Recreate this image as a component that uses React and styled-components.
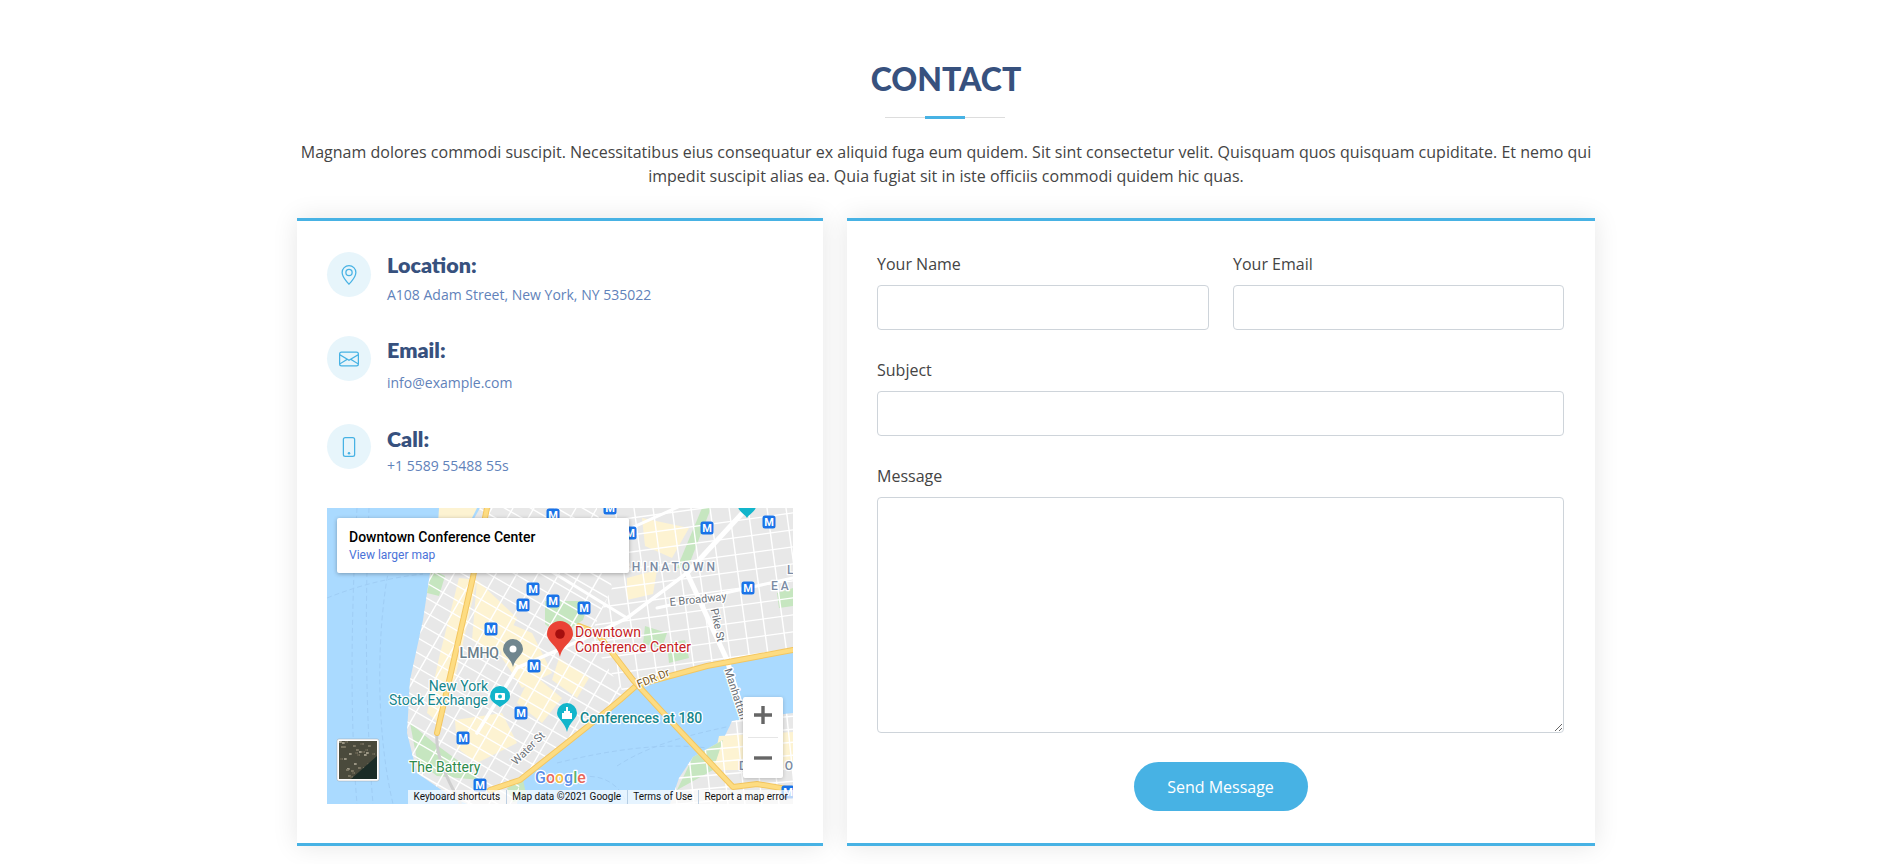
import React from 'react'
import styled, { createGlobalStyle } from 'styled-components'
import { BsGeoAlt, BsEnvelope, BsPhone } from 'react-icons/bs'

const Global = createGlobalStyle`
  html, body { margin: 0; padding: 0; background: #fff; overflow: hidden; }
  body { font-family: "Open Sans", "Liberation Sans", sans-serif; color: #444; }
`

const Section = styled.section`
  width: 1892px;
  height: 864px;
  padding-top: 60px;
  box-sizing: border-box;
  overflow: hidden;
`

const Heading = styled.header`
  text-align: center;
  width: 1298px;
  margin: 0 auto 30px;
`

const Title = styled.h2`
  position: relative;
  margin: 0 0 22px;
  height: 58px;
  line-height: 37px;
  font-family: Lato, "Open Sans", sans-serif;
  font-size: 32px;
  font-weight: 900;
  color: #37517e;
  text-transform: uppercase;

  &::before {
    content: '';
    position: absolute;
    left: 50%;
    bottom: 0;
    width: 120px;
    height: 1px;
    margin-left: -61px;
    background: #ddd;
  }
  &::after {
    content: '';
    position: absolute;
    left: 50%;
    bottom: -1px;
    width: 40px;
    height: 3px;
    margin-left: -21px;
    background: #47b2e4;
  }
`

const Lead = styled.p`
  margin: 0;
  font-size: 16px;
  line-height: 24px;
`

const Row = styled.div`
  display: flex;
  gap: 24px;
  width: 1298px;
  margin: 0 auto;
`

const Card = styled.div`
  box-sizing: border-box;
  width: ${p => p.$width}px;
  height: 628px;
  padding: ${p => p.$top || 30}px 30px 30px;
  background: #fff;
  border-top: 3px solid #47b2e4;
  border-bottom: 3px solid #47b2e4;
  box-shadow: 0 0 24px rgba(0, 0, 0, 0.1);
`

const Info = styled.div`
  position: relative;
  height: ${p => p.$height}px;
  padding-left: 60px;
`

const IconCircle = styled.span`
  position: absolute;
  left: 0;
  top: 0;
  width: 44px;
  height: 45px;
  display: flex;
  align-items: center;
  justify-content: center;
  border-radius: 50%;
  background: #e7f5fb;
  color: #47b2e4;
  font-size: 20px;
`

const InfoTitle = styled.h4`
  margin: 0 0 ${p => p.$gap}px;
  padding-top: ${p => p.$offset || 0}px;
  font-family: Lato, "Open Sans", sans-serif;
  font-size: 21.5px;
  line-height: 26px;
  font-weight: 800;
  color: #37517e;
`

const InfoText = styled.p`
  margin: 0;
  font-size: 14px;
  line-height: 20px;
  color: #6182ba;
`

const MapBox = styled.div`
  position: relative;
  width: 466px;
  height: 296px;
  overflow: hidden;
  background: #aadaff;
`

const MapArt = styled.svg`
  display: block;
  width: 466px;
  height: 296px;
`

const PlaceCard = styled.div`
  position: absolute;
  left: 10px;
  top: 10px;
  box-sizing: border-box;
  width: 292px;
  height: 55px;
  padding: 9px 12px;
  background: #fff;
  border-radius: 2px;
  box-shadow: 0 1px 4px rgba(0, 0, 0, 0.3);
  font-family: Roboto, sans-serif;
`

const PlaceName = styled.div`
  font-size: 14px;
  line-height: 20px;
  font-weight: 500;
  color: #000;
`

const LargerMap = styled.a`
  display: block;
  font-size: 12px;
  line-height: 16px;
  color: #4a72d8;
`

const Zoom = styled.div`
  position: absolute;
  left: 416px;
  top: 189px;
  width: 40px;
  height: 81px;
  background: #fff;
  border-radius: 2px;
  box-shadow: 0 1px 4px rgba(0, 0, 0, 0.2);
`

const ZoomDivider = styled.div`
  position: absolute;
  left: 5px;
  right: 5px;
  top: 40px;
  height: 1px;
  background: #e6e6e6;
`

const ZoomGlyph = styled.svg`
  position: absolute;
  left: 10px;
  top: ${p => p.$top}px;
  width: 20px;
  height: 20px;
`

const Attribution = styled.div`
  position: absolute;
  left: 81px;
  right: 0;
  bottom: 0;
  height: 14px;
  display: flex;
  align-items: center;
  background: rgba(255, 255, 255, 0.7);
  font-family: Roboto, sans-serif;
  font-size: 10px;
  color: #111;
  white-space: nowrap;
`

const AttributionItem = styled.span`
  padding: 0 5.5px;
  line-height: 14px;
  & + & { border-left: 1px solid rgba(150, 180, 210, 0.6); }
`

const Form = styled.form`
  display: grid;
  grid-template-columns: 332px 331px;
  column-gap: 24px;
  align-content: start;
`

const Field = styled.div`
  grid-column: ${p => (p.$wide ? '1 / 3' : 'auto')};
  margin-bottom: ${p => p.$bottom || 27.5}px;
`

const Label = styled.label`
  display: block;
  margin-bottom: 8px;
  font-size: 16px;
  line-height: 26px;
  color: #444;
`

const Input = styled.input`
  display: block;
  box-sizing: border-box;
  width: 100%;
  height: 44.5px;
  padding: 6px 12px;
  background: #fff;
  border: 1px solid #ced4da;
  border-radius: 4px;
  font-family: inherit;
`

const TextArea = styled.textarea`
  display: block;
  box-sizing: border-box;
  width: 100%;
  height: 236px;
  padding: 6px 12px;
  background: #fff;
  border: 1px solid #ced4da;
  border-radius: 4px;
  font-family: inherit;
`

const Actions = styled.div`
  grid-column: 1 / 3;
  display: flex;
  justify-content: center;
`

const Send = styled.button`
  width: 174px;
  height: 49px;
  padding: 0;
  border: 0;
  border-radius: 50px;
  background: #47b2e4;
  color: #fff;
  font-family: inherit;
  font-size: 16px;
`

// --- map drawing data, in map pixels ---
const land = '0,0 153,0 136,30 103,65 96,112 83,172 80,225 90,265 126,290 140,296 190,296 193,272 260,219 293,192 310,177 380,158 466,142 466,0'
const brooklyn = '466,205 440,208 405,213 396,232 366,249 352,270 343,296 466,296'
const westSide = '0,0 270,0 285,80 262,130 300,190 200,296 0,296'
const eastSide = '270,0 466,0 466,160 300,190 262,130 285,80'

const range = (from, to, step) => {
  const out = []
  for (let v = from; v <= to; v += step) out.push(v)
  return out
}

// the old town grid runs at 30 degrees, the east side is nearly square to the page
const westCross = range(-340, 300, 15).map(o => `M-100 ${o}L500 ${o + 346}`)
const westLong = range(60, 620, 21).map(o => `M${o} 0L${o - 171} 296`)
const eastCross = range(0, 240, 17).map(y => `M260 ${y + 16}L480 ${y - 14}`)
const eastLong = range(250, 480, 19).map(x => `M${x} 0L${x + 26} 190`)
const brooklynCross = range(200, 300, 13).map(y => `M340 ${y + 6}L480 ${y - 6}`)
const brooklynLong = range(340, 480, 17).map(x => `M${x} 200L${x + 10} 296`)

const yellowBlocks = [
  '132,70 150,72 128,170 112,215 100,205 112,150',
  '150,72 190,110 170,150 145,132',
  '170,110 205,125 225,165 195,180 175,150',
  '205,165 235,190 215,215 190,195',
  '128,212 175,205 190,235 150,255 130,240',
  '112,0 150,0 130,40 108,62',
  '315,10 362,20 345,50 318,38',
  '232,150 262,170 250,190 225,172',
  '170,25 198,40 186,60 160,48',
  '392,228 466,224 466,262 385,262',
  '300,70 330,62 326,86 300,92',
]

const parks = [
  '218,93 262,93 256,112 232,128 218,116',
  '83,215 107,235 137,257 153,272 110,268 90,252',
  '375,0 384,0 360,62 350,60',
  '105,62 118,68 112,88 100,85',
  '366,249 396,232 386,262 350,282',
  '450,85 466,80 466,98 452,100',
  '318,118 340,125 335,140 316,136',
  '340,135 358,132 362,150 342,155',
  '180,280 196,272 200,290 186,294',
]

const metros = [
  [226, 7], [283, 0], [206, 81], [196, 97], [226, 93], [257, 100], [164, 121], [207, 158],
  [194, 205], [380, 20], [442, 14], [421, 80], [303, 25], [136, 230], [153, 277], [461, 284],
]

// speckle for the little satellite tile, repeatable from the index alone
const speckle = range(0, 119, 1).map(i => ({
  x: 12 + ((i * 23) % 37),
  y: 233 + ((i * i * 7 + i * 3) % 37),
  tone: ['#9a9583', '#5f5b4a', '#7a7562'][i % 3],
}))

const labelHalo = { paintOrder: 'stroke', stroke: '#fff', strokeWidth: 2.5, strokeLinejoin: 'round' }

function Metro({ x, y }) {
  return (
    <g>
      <rect x={x - 6.5} y={y - 6.5} width="13" height="13" rx="2.5" fill="#1a73e8" />
      <text x={x} y={y + 4} textAnchor="middle" fontFamily="Roboto" fontWeight="700" fontSize="11" fill="#fff">M</text>
    </g>
  )
}

function Pin({ x, y, r, tip, fill, children }) {
  return (
    <g>
      <path d={`M${x} ${tip}C${x - 2} ${y + r * 0.9} ${x - r} ${y + r * 0.6} ${x - r} ${y}A${r} ${r} 0 1 1 ${x + r} ${y}C${x + r} ${y + r * 0.6} ${x + 2} ${y + r * 0.9} ${x} ${tip}Z`} fill={fill} />
      {children}
    </g>
  )
}

function MapLabel({ children, ...rest }) {
  return (
    <text fontFamily="Roboto" fontSize="14" style={labelHalo} {...rest}>{children}</text>
  )
}

function Streets({ paths, width = 1.4 }) {
  return (
    <g fill="none" stroke="#fff" strokeWidth={width}>
      {paths.map(d => <path key={d} d={d} />)}
    </g>
  )
}

function MapDrawing() {
  return (
    <MapArt viewBox="0 0 466 296">
      <defs>
        <clipPath id="manhattan"><polygon points={land} /></clipPath>
        <clipPath id="brooklyn"><polygon points={brooklyn} /></clipPath>
        <clipPath id="west"><polygon points={westSide} /></clipPath>
        <clipPath id="east"><polygon points={eastSide} /></clipPath>
        <clipPath id="thumb"><rect x="12" y="233" width="38" height="38" /></clipPath>
      </defs>
      <rect width="466" height="296" fill="#aadaff" />
      <g fill="none" stroke="#9fcdf5" strokeWidth="1" strokeDasharray="5 3">
        <path d="M30 0C25 90 22 200 30 296" />
        <path d="M42 0C38 90 38 200 46 296" />
        <path d="M62 60C50 120 48 220 66 296" />
        <path d="M0 90C30 78 60 70 96 66" />
        <path d="M290 258C330 232 380 222 466 206" />
        <path d="M230 255C290 240 340 235 380 240" />
        <path d="M240 275C260 262 290 268 300 296" />
      </g>
      <polygon points={land} fill="#e8e8e8" />
      <polygon points={brooklyn} fill="#e8e8e8" />
      <g fill="#fdf3d2">
        {yellowBlocks.map(b => <polygon key={b} points={b} />)}
      </g>
      <g fill="#c6e6c0">
        {parks.map(p => <polygon key={p} points={p} />)}
      </g>
      <g clipPath="url(#manhattan)">
        <g clipPath="url(#west)">
          <Streets paths={westCross} />
          <Streets paths={westLong} />
        </g>
        <g clipPath="url(#east)">
          <Streets paths={eastCross} />
          <Streets paths={eastLong} />
        </g>
      </g>
      <g clipPath="url(#brooklyn)">
        <Streets paths={brooklynCross} />
        <Streets paths={brooklynLong} />
      </g>
      <g fill="none" stroke="#fff" strokeLinecap="round">
        <path d="M420 0L360 65L400 152L416 205" strokeWidth="5" />
        <path d="M360 65L300 110L270 125L190 160L150 225" strokeWidth="3.5" />
        <path d="M330 100L466 70" strokeWidth="3" />
        <path d="M215 60L360 -5" strokeWidth="3" />
        <path d="M170 30L300 110" strokeWidth="3" />
      </g>
      <path d="M110 225C108 245 118 268 134 296" fill="none" stroke="#cfcfcf" strokeWidth="3" />
      <g fill="none" strokeLinecap="round" strokeLinejoin="round">
        <path d="M163 282L193 272L260 219L293 192L310 177L380 158L466 142" stroke="#f3c661" strokeWidth="6" />
        <path d="M163 282L193 272L260 219L293 192L310 177L380 158L466 142" stroke="#fddc82" strokeWidth="4" />
        <path d="M252 118L270 125L306 172L340 209L406 279L430 276L466 282" stroke="#f3c661" strokeWidth="6" />
        <path d="M252 118L270 125L306 172L340 209L406 279L430 276L466 282" stroke="#fddc82" strokeWidth="4" />
        <path d="M160 0L146 69L123 169L110 225" stroke="#f3c661" strokeWidth="6" />
        <path d="M160 0L146 69L123 169L110 225" stroke="#fddc82" strokeWidth="4" />
      </g>

      {metros.map(([x, y]) => <Metro key={`${x}-${y}`} x={x} y={y} />)}

      <text x="391" y="63" textAnchor="end" fontFamily="Roboto" fontWeight="500" fontSize="12" letterSpacing="3" fill="#7b8ba3" style={labelHalo}>CHINATOWN</text>
      <text x="460" y="66" fontFamily="Roboto" fontWeight="500" fontSize="12" letterSpacing="3" fill="#7b8ba3" style={labelHalo}>L</text>
      <text x="444" y="82" fontFamily="Roboto" fontWeight="500" fontSize="12" letterSpacing="3" fill="#7b8ba3" style={labelHalo}>EA</text>
      <text x="412" y="262" fontFamily="Roboto" fontWeight="500" fontSize="12" letterSpacing="3" fill="#7b8ba3" style={labelHalo}>DUMBO</text>

      <MapLabel x="371" y="95" fontSize="11" textAnchor="middle" fill="#6b7178" transform="rotate(-6 371 91)">E Broadway</MapLabel>
      <MapLabel x="391" y="121" fontSize="11" textAnchor="middle" fill="#6b7178" transform="rotate(78 391 117)">Pike St</MapLabel>
      <MapLabel x="412" y="186" fontSize="11" textAnchor="middle" fill="#6b7178" transform="rotate(72 408 182)">Manhattan</MapLabel>
      <MapLabel x="201" y="244" fontSize="11" textAnchor="middle" fill="#6b7178" transform="rotate(-45 201 240)">Water St</MapLabel>
      <MapLabel x="326" y="174" fontSize="11" textAnchor="middle" fill="#7a5a1e" transform="rotate(-22 326 170)">FDR Dr</MapLabel>

      <MapLabel x="172" y="150" textAnchor="end" fontWeight="500" fill="#6a7f8c">LMHQ</MapLabel>
      <MapLabel x="161" y="183" textAnchor="end" fill="#15868c">New York</MapLabel>
      <MapLabel x="161" y="197" textAnchor="end" fill="#15868c">Stock Exchange</MapLabel>
      <MapLabel x="82" y="264" fill="#2e8b4a">The Battery</MapLabel>
      <MapLabel x="253" y="215" fontWeight="500" fill="#15868c">Conferences at 180</MapLabel>
      <MapLabel x="248" y="129" fill="#c5221f">Downtown</MapLabel>
      <MapLabel x="248" y="144" fill="#c5221f">Conference Center</MapLabel>

      <Pin x={186} y={141} r={10} tip={159} fill="#70868f"><circle cx="186" cy="141" r="3.5" fill="#fff" /></Pin>
      <Pin x={173} y={188} r={10} tip={199} fill="#12b5cb">
        <rect x="168" y="185" width="10" height="7" rx="1" fill="#fff" />
        <circle cx="173" cy="188.5" r="2" fill="#12b5cb" />
      </Pin>
      <Pin x={240} y={205} r={10} tip={224} fill="#12b5cb">
        <path d="M235 211V205H237V203H239V199H241V203H243V205H245V211Z" fill="#fff" />
      </Pin>
      <Pin x={420} y={-2} r={9} tip={10} fill="#12b5cb" />
      <Pin x={233} y={126} r={13} tip={149} fill="#ea4335"><circle cx="233" cy="126" r="4.8" fill="#a50e0e" /></Pin>

      <rect x="10" y="231" width="42" height="42" rx="2" fill="#fff" stroke="#999" strokeOpacity="0.4" />
      <g clipPath="url(#thumb)">
        <rect x="12" y="233" width="38" height="38" fill="#4a4a3c" />
        {speckle.map((s, i) => (
          <rect key={i} x={s.x} y={s.y} width="2.5" height="2" fill={s.tone} />
        ))}
        <polygon points="24,271 50,248 50,271" fill="#1b2c27" />
      </g>

      <text x="208" y="275" fontFamily="Roboto" fontWeight="500" fontSize="16" style={labelHalo}>
        <tspan fill="#5a8de8">G</tspan><tspan fill="#e8685c">o</tspan><tspan fill="#f2bd42">o</tspan><tspan fill="#5a8de8">g</tspan><tspan fill="#5ab56f">l</tspan><tspan fill="#e8685c">e</tspan>
      </text>
    </MapArt>
  )
}

export default function App() {
  return (
    <Section>
      <Global />
      <Heading>
        <Title>Contact</Title>
        <Lead>
          Magnam dolores commodi suscipit. Necessitatibus eius consequatur ex aliquid fuga eum quidem. Sit sint consectetur velit. Quisquam quos quisquam cupiditate. Et nemo qui impedit suscipit alias ea. Quia fugiat sit in iste officiis commodi quidem hic quas.
        </Lead>
      </Heading>
      <Row>
        <Card $width={526} $top={31}>
          <Info $height={84}>
            <IconCircle><BsGeoAlt /></IconCircle>
            <InfoTitle $gap={7}>Location:</InfoTitle>
            <InfoText>A108 Adam Street, New York, NY 535022</InfoText>
          </Info>
          <Info $height={88}>
            <IconCircle><BsEnvelope /></IconCircle>
            <InfoTitle $offset={1} $gap={10}>Email:</InfoTitle>
            <InfoText>info@example.com</InfoText>
          </Info>
          <Info $height={84}>
            <IconCircle><BsPhone /></IconCircle>
            <InfoTitle $offset={2} $gap={4}>Call:</InfoTitle>
            <InfoText>+1 5589 55488 55s</InfoText>
          </Info>
          <MapBox>
            <MapDrawing />
            <PlaceCard>
              <PlaceName>Downtown Conference Center</PlaceName>
              <LargerMap>View larger map</LargerMap>
            </PlaceCard>
            <Zoom>
              <ZoomGlyph $top={8} viewBox="0 0 20 20"><path d="M1 10h18M10 1v18" stroke="#666" strokeWidth="3.4" /></ZoomGlyph>
              <ZoomDivider />
              <ZoomGlyph $top={51} viewBox="0 0 20 20"><path d="M1 10h18" stroke="#666" strokeWidth="3.4" /></ZoomGlyph>
            </Zoom>
            <Attribution>
              <AttributionItem>Keyboard shortcuts</AttributionItem>
              <AttributionItem>Map data ©2021 Google</AttributionItem>
              <AttributionItem>Terms of Use</AttributionItem>
              <AttributionItem>Report a map error</AttributionItem>
            </Attribution>
          </MapBox>
        </Card>
        <Card $width={748}>
          <Form>
            <Field>
              <Label>Your Name</Label>
              <Input type="text" />
            </Field>
            <Field>
              <Label>Your Email</Label>
              <Input type="email" />
            </Field>
            <Field $wide>
              <Label>Subject</Label>
              <Input type="text" />
            </Field>
            <Field $wide $bottom={29}>
              <Label>Message</Label>
              <TextArea />
            </Field>
            <Actions>
              <Send type="button">Send Message</Send>
            </Actions>
          </Form>
        </Card>
      </Row>
    </Section>
  )
}
